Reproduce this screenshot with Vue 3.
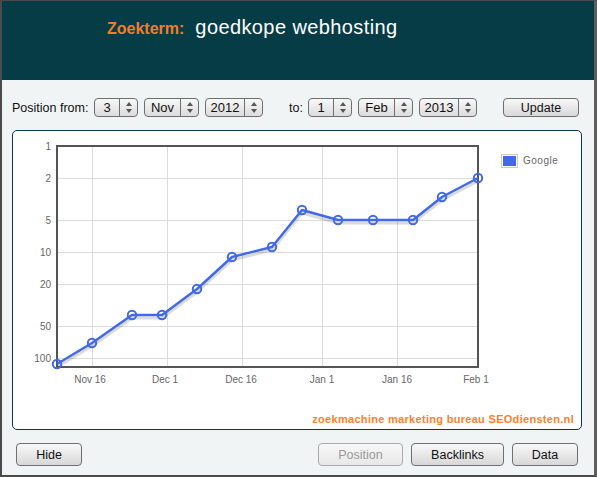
<template>
  <div class="window">
    <header class="top">
      <span class="term-label">Zoekterm:</span>
      <span class="term">goedkope webhosting</span>
    </header>

    <main class="body">
      <form class="range" @submit.prevent>
        <span class="lbl">Position from:</span>
        <div class="spins">
          <div v-for="s in fromSpins" :key="s.val" class="spin" :style="{ width: s.w + 'px' }">
            <span class="spin-val">{{ s.val }}</span>
            <span class="spin-arrows"><i class="up"></i><i class="down"></i></span>
          </div>
        </div>
        <span class="lbl to">to:</span>
        <div class="spins">
          <div v-for="s in toSpins" :key="s.val" class="spin" :style="{ width: s.w + 'px' }">
            <span class="spin-val">{{ s.val }}</span>
            <span class="spin-arrows"><i class="up"></i><i class="down"></i></span>
          </div>
        </div>
        <button class="btn update" type="button">Update</button>
      </form>

      <section class="card">
        <svg class="chart" width="570" height="300" viewBox="0 0 570 300">
          <!-- coordinates are offset by the card's position -->
          <g transform="translate(-13,-131)">
            <g class="grid">
              <line v-for="x in gridX" :key="'x' + x" :x1="x + 0.5" :x2="x + 0.5" y1="146" y2="367" />
              <line v-for="t in ticksY" :key="'y' + t.label" x1="58" x2="478" :y1="t.y + 0.5" :y2="t.y + 0.5" />
            </g>
            <rect class="plot" x="57" y="146" width="421" height="221" />
            <polyline class="shadow" :points="shadowPoints" />
            <polyline class="line" :points="linePoints" />
            <circle v-for="p in points" :key="p[0]" class="dot" :cx="p[0]" :cy="p[1]" r="4.2" />
            <text v-for="t in ticksY" :key="t.label" class="tick" x="51" :y="t.y + 3.5" text-anchor="end">{{ t.label }}</text>
            <text v-for="t in ticksX" :key="t.label" class="tick" :x="t.x" y="383" text-anchor="middle">{{ t.label }}</text>
            <rect class="legend-box" x="501.5" y="154.5" width="16" height="13" />
            <rect class="legend-fill" x="503" y="156" width="13" height="10" />
            <text class="tick legend-text" x="523" y="164">Google</text>
          </g>
        </svg>
        <a class="credit">zoekmachine marketing bureau SEOdiensten.nl</a>
      </section>

      <footer class="actions">
        <button class="btn hide" type="button">Hide</button>
        <div class="right">
          <button class="btn position" type="button" disabled>Position</button>
          <button class="btn backlinks" type="button">Backlinks</button>
          <button class="btn data" type="button">Data</button>
        </div>
      </footer>
    </main>
  </div>
</template>

<script setup>
const fromSpins = [
  { val: '3', w: 44 },
  { val: 'Nov', w: 55 },
  { val: '2012', w: 58 }
]
const toSpins = [
  { val: '1', w: 44 },
  { val: 'Feb', w: 55 },
  { val: '2013', w: 58 }
]

const points = [
  [57, 364], [92, 343], [132, 315], [162, 315], [197, 289], [232, 257], [272, 247],
  [302, 210], [338, 220], [373, 220], [413, 220], [442, 197], [478, 178]
]
const linePoints = points.map(p => p.join(',')).join(' ')
const shadowPoints = points.map(p => p[0] + ',' + (p[1] + 3)).join(' ')

const gridX = [92, 167, 242, 322, 397]
const ticksY = [
  { label: '1', y: 146 },
  { label: '2', y: 178 },
  { label: '5', y: 220 },
  { label: '10', y: 252 },
  { label: '20', y: 284 },
  { label: '50', y: 326 },
  { label: '100', y: 358 }
]
const ticksX = [
  { label: 'Nov 16', x: 90 },
  { label: 'Dec 1', x: 165 },
  { label: 'Dec 16', x: 241 },
  { label: 'Jan 1', x: 322 },
  { label: 'Jan 16', x: 397 },
  { label: 'Feb 1', x: 476 }
]
</script>

<style>
html, body { margin: 0; background: #f0f4f5; }
</style>

<style scoped>
.window {
  width: 597px;
  height: 477px;
  box-sizing: border-box;
  border: 2px solid #4a4a4a;
  border-top-width: 1px;
  border-right: 3px solid #5e5e5e;
  font-family: "Liberation Sans", Arial, sans-serif;
  display: flex;
  flex-direction: column;
  background: #f0f4f5;
}

.top {
  height: 79px;
  flex: none;
  box-sizing: border-box;
  background: #063c46;
  padding: 15px 0 0 105px;
  display: flex;
  align-items: baseline;
}
.term-label {
  color: #f57c26;
  font-size: 16px;
  font-weight: bold;
  margin-right: 11px;
}
.term {
  color: #fff;
  font-size: 20px;
  letter-spacing: 0.4px;
}

.body {
  flex: 1;
  padding: 0 12px 0 10px;
  display: flex;
  flex-direction: column;
}

.range {
  height: 50px;
  flex: none;
  box-sizing: border-box;
  padding-top: 5px;
  display: flex;
  align-items: center;
  font-size: 12.5px;
  color: #111;
}
.lbl { width: 76px; margin-right: 6px; white-space: nowrap; }
.lbl.to { width: 14px; margin-left: 26px; margin-right: 5px; }
.spins { display: flex; gap: 6px; }

.spin {
  height: 19px;
  box-sizing: border-box;
  border: 1px solid #6f6f6f;
  border-radius: 4px;
  background: linear-gradient(#f8f8f8, #dcdcdc);
  display: flex;
  font-size: 13px;
}
.spin-val {
  flex: 1;
  text-align: center;
  line-height: 17px;
}
.spin-arrows {
  width: 17px;
  border-left: 1px solid #6f6f6f;
  display: flex;
  flex-direction: column;
  align-items: center;
  justify-content: center;
  gap: 3px;
}
.spin-arrows i {
  width: 0;
  height: 0;
  border-left: 3px solid transparent;
  border-right: 3px solid transparent;
}
.spin-arrows .up { border-bottom: 4px solid #555; }
.spin-arrows .down { border-top: 4px solid #555; }

.btn {
  height: 23px;
  box-sizing: border-box;
  border: 1px solid #6f6f6f;
  border-radius: 4px;
  background: linear-gradient(#f8f8f8, #d8d8d8);
  font-family: inherit;
  font-size: 12.5px;
  color: #111;
  padding: 0;
}
.update {
  width: 76px;
  height: 19px;
  margin-left: auto;
  margin-right: 3px;
}

.card {
  width: 570px;
  height: 300px;
  flex: none;
  box-sizing: border-box;
  position: relative;
  background: #fff;
  border: 1px solid #063c46;
  border-radius: 5px;
  overflow: hidden;
}
.chart {
  display: block;
  position: absolute;
  left: 0;
  top: 0;
}
.grid line { stroke: #dcdcdc; stroke-width: 1; }
.plot { fill: none; stroke: #555; stroke-width: 2; }
.shadow { fill: none; stroke: rgba(0, 0, 0, 0.14); stroke-width: 3; }
.line { fill: none; stroke: #4169e8; stroke-width: 2.4; stroke-linejoin: round; }
.dot { fill: none; stroke: #4169e8; stroke-width: 2; }
.tick { font-size: 10px; fill: #666; font-family: "Liberation Sans", Arial, sans-serif; }
.legend-text { letter-spacing: 0.5px; }
.legend-box { fill: #fff; stroke: #ccc; }
.legend-fill { fill: #4169e8; }

.credit {
  position: absolute;
  right: 7px;
  bottom: 4px;
  color: #ff7f2a;
  font-size: 11px;
  font-weight: bold;
  letter-spacing: 0.3px;
}

.actions {
  flex: 1;
  box-sizing: border-box;
  padding: 4px 4px 0;
  display: flex;
  align-items: center;
}
.hide { width: 66px; }
.right { margin-left: auto; display: flex; gap: 8px; }
.position { width: 85px; color: #999; border-color: #aaa; background: linear-gradient(#f8f8f8, #e8e8e8); }
.backlinks { width: 93px; }
.data { width: 66px; }
</style>
